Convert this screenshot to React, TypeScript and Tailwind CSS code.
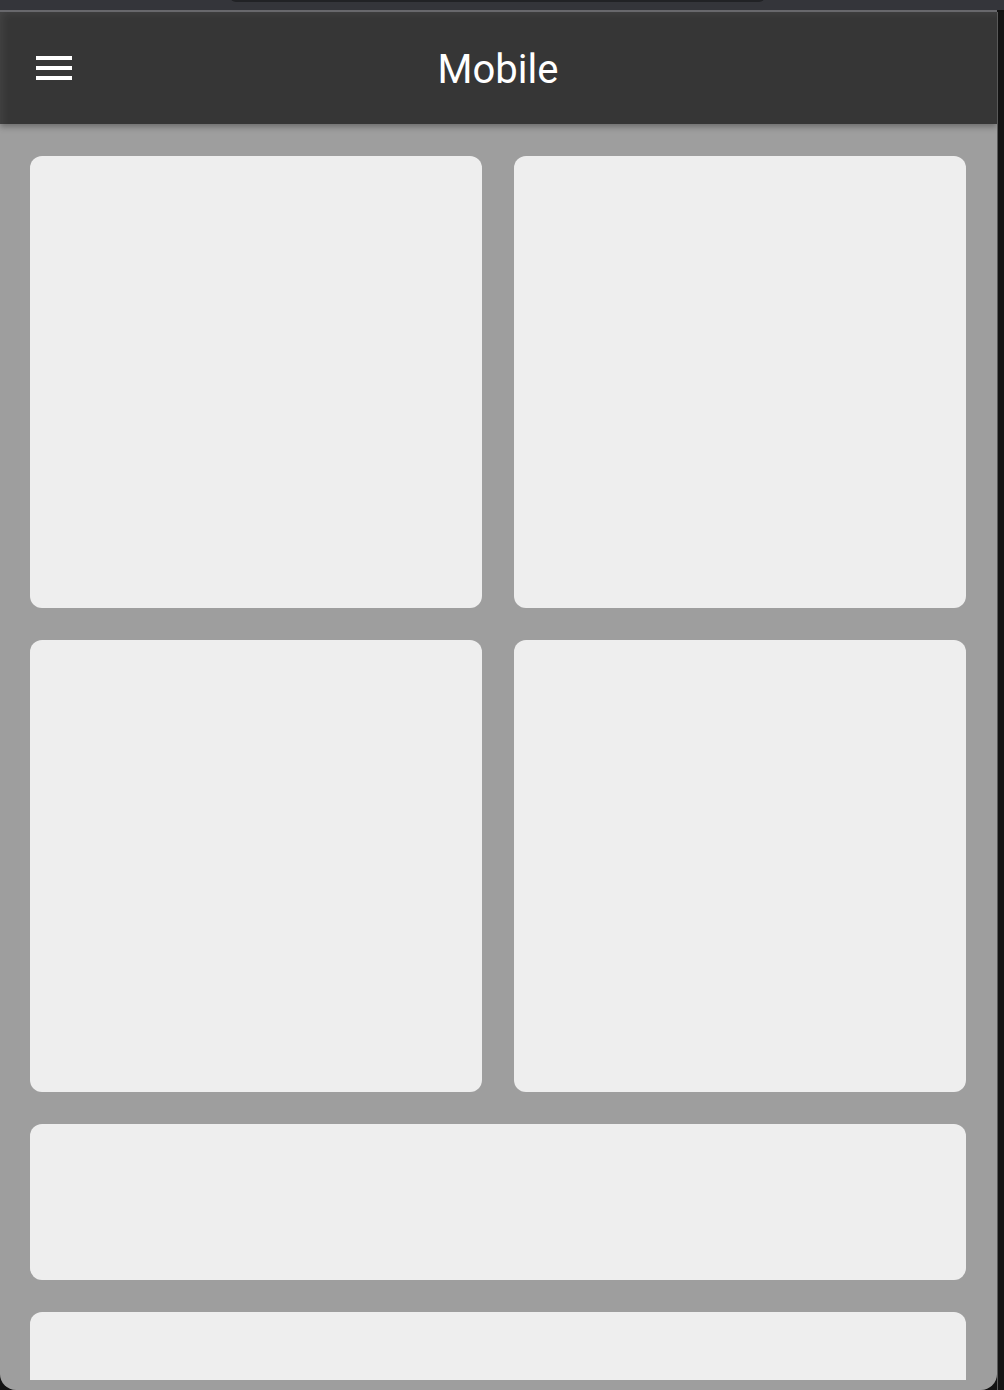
export default function App() {
  return (
    <div className="w-[1004px] h-[1390px] bg-[#121212] overflow-hidden flex flex-col" style={{ fontFamily: "Roboto, 'Noto Sans', sans-serif" }}>
      {/* browser top strip */}
      <div className="h-[10px] shrink-0 bg-[#34353a] relative">
        <div className="absolute left-[230px] top-[-10px] w-[535px] h-[12px] rounded-[8px] bg-[#212225]" />
      </div>
      <div className="h-[2px] shrink-0 bg-[#68686c] w-[997px]" />
      <div className="flex flex-1 min-h-0">
        {/* device frame */}
        <div className="w-[997px] h-full bg-[#9e9e9e] rounded-b-[16px] flex flex-col overflow-hidden">
          <header className="h-[112px] shrink-0 bg-[#363636] relative flex items-center justify-center shadow-[inset_8px_6px_10px_-6px_rgba(255,255,255,0.08),0_3px_6px_rgba(0,0,0,0.3)] z-10">
            <button className="absolute left-[36px] top-[44px] flex flex-col gap-[6px]" aria-label="menu">
              <span className="block w-[36px] h-[4px] bg-white" />
              <span className="block w-[36px] h-[4px] bg-white" />
              <span className="block w-[36px] h-[4px] bg-white" />
            </button>
            <h1 className="text-white text-[40px] leading-none font-normal pt-[3px] pr-[1px]">Mobile</h1>
          </header>
          <main className="flex-1 min-h-0 overflow-hidden mb-[10px]">
            <div className="pt-[32px] pl-[30px] pr-[31px] flex flex-col gap-[32px]">
              <div className="grid grid-cols-2 gap-[32px]">
                <div className="h-[452px] rounded-xl bg-[#eeeeee]" />
                <div className="h-[452px] rounded-xl bg-[#eeeeee]" />
                <div className="h-[452px] rounded-xl bg-[#eeeeee]" />
                <div className="h-[452px] rounded-xl bg-[#eeeeee]" />
              </div>
              <div className="h-[156px] rounded-xl bg-[#eeeeee]" />
              <div className="h-[156px] rounded-xl bg-[#eeeeee]" />
            </div>
          </main>
        </div>
        {/* edge of the next window */}
        <div className="flex-1 border-l border-[#5a5a5a] bg-[#141414]" />
      </div>
    </div>
  );
}
